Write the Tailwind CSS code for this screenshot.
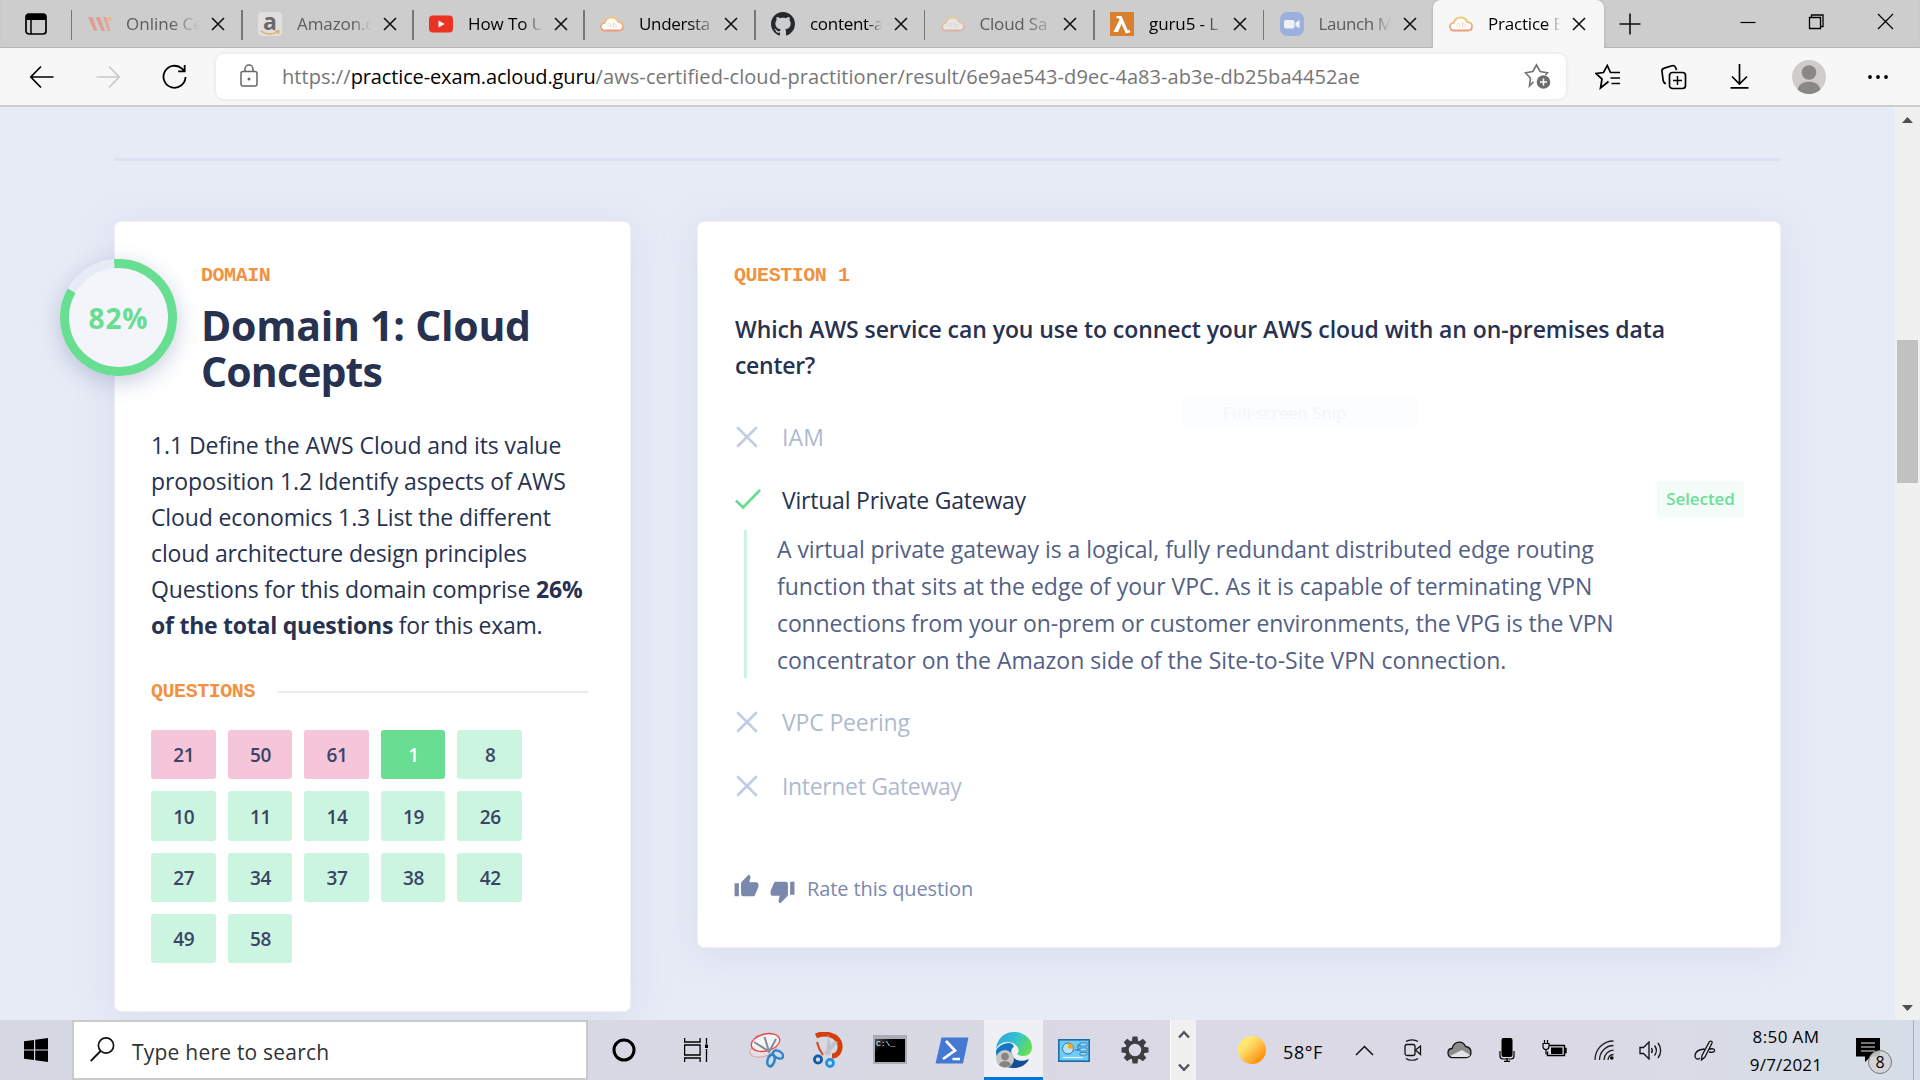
<!DOCTYPE html>
<html lang="en">
<head>
<meta charset="utf-8">
<title>Practice Exam</title>
<script src="https://cdn.jsdelivr.net/npm/@tailwindcss/browser@4"></script>
</head>
<body class="w-[1920px] h-[1080px] overflow-hidden flex flex-col font-['Open_Sans',sans-serif] bg-[#e7ebf6]">

<svg class="absolute w-0 h-0">
  <defs>
    <linearGradient id="cloudg" x1="0" y1="0" x2="0" y2="1"><stop offset="0" stop-color="#f6c77d"/><stop offset="1" stop-color="#ee9a7b"/></linearGradient>
    <symbol id="x" viewBox="0 0 14 14"><path d="M1 1L13 13M13 1L1 13" stroke="#111" stroke-width="1.6" fill="none"/></symbol>
    <symbol id="cloud" viewBox="0 0 24 24"><path d="M5 18.500C2.500 18.500 1 17 1 14.800c0-2.200 1.600-3.800 3.800-3.900C5.500 7.700 8 5.500 11.500 5.500c3.300 0 5.800 1.900 6.800 4.700 2.700.2 4.700 1.900 4.700 4.300 0 2.400-1.700 4-4.200 4z" fill="#fff" stroke="url(#cloudg)" stroke-width="1.800"/><path d="M8 15v-2.500c0-1.500 2.500-1.500 2.500 0V15M13.500 10v5h1.500c2 0 2-3 0-3h-1" stroke="#f8dcc2" stroke-width="1" fill="none"/></symbol>
    <symbol id="wrong" viewBox="0 0 22 22"><path d="M1.200 1.200L20.800 20.800M20.800 1.200L1.200 20.800" stroke="#c2cde3" stroke-width="2.700" fill="none"/></symbol>
  </defs>
</svg>

<!-- Tab strip -->
<div class="h-12 shrink-0 bg-[#cdcdcd] flex items-end shadow-[inset_0_-1px_1px_#b4b4b4]">
  <div class="w-[71px] h-12 pl-[25px] pt-3 shrink-0">
    <svg class="w-[22px] h-6" viewBox="0 0 22 24"><rect x="1" y="2" width="20" height="20" rx="3" fill="none" stroke="#000" stroke-width="1.700"/><path d="M1 8V5a3 3 0 0 1 3-3h14a3 3 0 0 1 3 3v3z"/><path d="M6 7v15" stroke="#000" stroke-width="1.500"/></svg>
  </div>

  <div class="w-[171px] h-12 shrink-0 flex items-center relative pl-[17px]">
    <div class="absolute left-[-0.5px] top-[10px] h-[30px] w-[1.5px] bg-[#777]"></div>
    <svg class="w-6 h-6 shrink-0" viewBox="0 0 24 24"><path d="M0 5h4.500l5 14H6zM7.500 5H12l5 14h-3.500z" fill="#dd9f96"/><path d="M15 5h3.500l4 14H20z" fill="#e0a696"/><circle cx="21.800" cy="7" r="2.200" fill="#ebb795"/></svg>
    <div class="ml-[14px] w-[74px] whitespace-nowrap text-[17px] text-[#5c5c5c] mask-r-from-60% mask-r-to-100%">Online Ce</div>
    <svg class="ml-[11px] w-[14px] h-[14px] shrink-0"><use href="#x"/></svg>
  </div>

  <div class="w-[171px] h-12 shrink-0 flex items-center relative pl-4">
    <div class="absolute left-[-1px] top-[10px] h-[30px] w-[1.5px] bg-[#777]"></div>
    <div class="w-6 h-6 shrink-0 rounded bg-[#dfdfdf] relative text-center font-bold text-[23px] leading-[18px] text-[#696969]">a<svg class="absolute left-0 top-0 w-6 h-6" viewBox="0 0 24 24"><path d="M3 19c5 4 12 4 17 0.500M17 19h4l-1 3" fill="none" stroke="#e0b163" stroke-width="1.500"/></svg></div>
    <div class="ml-[15px] w-[74px] whitespace-nowrap text-[17px] text-[#5c5c5c] tracking-[-0.1px] mask-r-from-75% mask-r-to-100%">Amazon.c</div>
    <svg class="ml-[12px] w-[14px] h-[14px] shrink-0"><use href="#x"/></svg>
  </div>

  <div class="w-[171px] h-12 shrink-0 flex items-center relative pl-4">
    <div class="absolute left-[-1px] top-[10px] h-[30px] w-[1.5px] bg-[#777]"></div>
    <svg class="w-6 h-6 shrink-0" viewBox="0 0 24 24"><rect y="3.500" width="24" height="17" rx="4" fill="#ea3323"/><path d="M9.500 8.500l6 3.500-6 3.500z" fill="#fff"/></svg>
    <div class="ml-[15px] w-[74px] whitespace-nowrap text-[17px] text-black tracking-[-0.1px] mask-r-from-75% mask-r-to-100%">How To U</div>
    <svg class="ml-[12px] w-[14px] h-[14px] shrink-0"><use href="#x"/></svg>
  </div>

  <div class="w-[171px] h-12 shrink-0 flex items-center relative pl-4">
    <div class="absolute left-[-1px] top-[10px] h-[30px] w-[1.5px] bg-[#777]"></div>
    <svg class="w-6 h-6 shrink-0"><use href="#cloud"/></svg>
    <div class="ml-[15px] w-[72px] whitespace-nowrap text-[17px] text-black tracking-[-0.3px] mask-r-from-70% mask-r-to-110%">Understa</div>
    <svg class="ml-[13px] w-[14px] h-[14px] shrink-0"><use href="#x"/></svg>
  </div>

  <div class="w-[169.500px] h-12 shrink-0 flex items-center relative pl-4">
    <div class="absolute left-[-1px] top-[10px] h-[30px] w-[1.5px] bg-[#777]"></div>
    <svg class="w-6 h-6 shrink-0" viewBox="0 0 16 16"><path fill="#24292e" d="M8 0C3.580 0 0 3.580 0 8c0 3.540 2.290 6.530 5.470 7.590.4.070.550-.170.550-.380 0-.190-.010-.820-.010-1.490-2.010.370-2.530-.490-2.690-.940-.090-.230-.480-.940-.820-1.130-.280-.150-.680-.520-.010-.530.630-.010 1.080.580 1.230.820.720 1.210 1.870.870 2.330.660.070-.520.280-.870.510-1.070-1.780-.2-3.640-.890-3.640-3.950 0-.870.310-1.590.820-2.150-.080-.2-.360-1.020.080-2.120 0 0 .670-.210 2.200.820.640-.180 1.320-.270 2-.270s1.360.090 2 .270c1.530-1.040 2.200-.820 2.200-.820.440 1.100.160 1.920.080 2.120.510.560.820 1.270.820 2.150 0 3.070-1.870 3.750-3.650 3.950.290.250.540.730.540 1.480 0 1.070-.010 1.930-.010 2.200 0 .210.150.460.550.380A8.010 8.010 0 0 0 16 8c0-4.420-3.580-8-8-8z"/></svg>
    <div class="ml-[15px] w-[72px] whitespace-nowrap text-[17px] text-black tracking-[-0.3px] mask-r-from-80% mask-r-to-100%">content-a</div>
    <svg class="ml-[12px] w-[14px] h-[14px] shrink-0"><use href="#x"/></svg>
  </div>

  <div class="w-[169.5px] h-12 shrink-0 flex items-center relative pl-4">
    <div class="absolute left-[-1px] top-[10px] h-[30px] w-[1.5px] bg-[#777]"></div>
    <svg class="w-6 h-6 shrink-0 opacity-50"><use href="#cloud"/></svg>
    <div class="ml-[15px] w-[72px] whitespace-nowrap text-[17px] text-[#5c5c5c] tracking-[-0.2px] mask-r-from-60% mask-r-to-110%">Cloud Sa</div>
    <svg class="ml-[11.500px] w-[14px] h-[14px] shrink-0"><use href="#x"/></svg>
  </div>

  <div class="w-[169.500px] h-12 shrink-0 flex items-center relative pl-4">
    <div class="absolute left-[-1px] top-[10px] h-[30px] w-[1.5px] bg-[#777]"></div>
    <svg class="w-6 h-6 shrink-0" viewBox="0 0 24 24"><rect width="24" height="24" fill="#d9802e"/><path d="M6.500 4h5l6.300 14.500 1.700-.7 1 2.500-4.700 1.200L11.600 12 8 20H3.500l6-12.500-.5-1.200H6.500z" fill="#fff"/></svg>
    <div class="ml-[15px] w-[72px] whitespace-nowrap text-[17px] text-black tracking-[-0.1px] mask-r-from-75% mask-r-to-105%">guru5 - L</div>
    <svg class="ml-[12px] w-[14px] h-[14px] shrink-0"><use href="#x"/></svg>
  </div>

  <div class="w-[169.500px] h-12 shrink-0 flex items-center relative pl-4">
    <div class="absolute left-[-1px] top-[10px] h-[30px] w-[1.5px] bg-[#777]"></div>
    <svg class="w-6 h-6 shrink-0" viewBox="0 0 24 24"><rect width="24" height="24" rx="7" fill="#9db0dd"/><rect x="4" y="8" width="10.500" height="8.500" rx="2" fill="#eef1f8"/><path d="M15.500 10.700l4-2.700v8.500l-4-2.700z" fill="#eef1f8"/></svg>
    <div class="ml-[15px] w-[72px] whitespace-nowrap text-[17px] text-[#5c5c5c] tracking-[-0.4px] mask-r-from-75% mask-r-to-100%">Launch M</div>
    <svg class="ml-[12px] w-[14px] h-[14px] shrink-0"><use href="#x"/></svg>
  </div>

  <div class="w-[171px] h-12 shrink-0 flex items-center pl-4 bg-[#f7f7f7] rounded-t-lg shadow-[0_0_3px_#aaa]">
    <svg class="w-6 h-6 shrink-0"><use href="#cloud"/></svg>
    <div class="ml-[15px] w-[72px] whitespace-nowrap text-[17px] text-black tracking-[-0.2px] mask-r-from-80% mask-r-to-100%">Practice E</div>
    <svg class="ml-[12px] w-[14px] h-[14px] shrink-0"><use href="#x"/></svg>
  </div>

  <div class="flex-1 h-12 flex items-center">
    <svg class="ml-[15px] w-[22px] h-[22px]" viewBox="0 0 22 22"><path d="M11 0.500v21M0.500 11h21" stroke="#111" stroke-width="1.600"/></svg>
    <svg class="ml-[99px] mb-[5px] w-[16px] h-[16px]" viewBox="0 0 16 16"><path d="M0.500 8.500h15" stroke="#000" stroke-width="1.200"/></svg>
    <svg class="ml-[52px] mb-[5px] w-[17px] h-[17px]" viewBox="0 0 17 17"><path d="M1.500 4.500h11v11h-11zM3.500 4.500v-2.500h11.500v11.500h-2.500" fill="none" stroke="#000" stroke-width="1.300"/></svg>
    <svg class="ml-[52px] mb-[5px] w-[17px] h-[17px]" viewBox="0 0 17 17"><path d="M1 1l15 15M16 1L1 16" stroke="#000" stroke-width="1.200"/></svg>
  </div>
</div>

<!-- Toolbar -->
<div class="h-[59px] shrink-0 bg-[#f7f7f7] border-b-2 border-[#cdcdcd] flex items-center">
  <svg class="ml-[29px] w-[25px] h-6 shrink-0" viewBox="0 0 25 24"><path d="M12 1.500L1.800 12 12 22.500M1.800 12H24.500" fill="none" stroke="#000" stroke-width="1.700"/></svg>
  <svg class="ml-[42px] w-[25px] h-6 shrink-0" viewBox="0 0 25 24"><path d="M13 1.500L23.200 12 13 22.500M23.200 12H.5" fill="none" stroke="#c9c9c9" stroke-width="1.700"/></svg>
  <svg class="ml-[41px] w-[25px] h-[26px] shrink-0" viewBox="0 0 25 26"><path d="M23.500 13a11 11 0 1 1-3.500-8.300L22.500 7M22.700 1v6.300h-6.500" fill="none" stroke="#000" stroke-width="1.800"/></svg>
  <div class="ml-[29px] w-[1350px] h-[45px] bg-white rounded-lg shadow-[0_0_4px_rgba(0,0,0,0.10)] flex items-center shrink-0">
    <svg class="ml-6 w-[18px] h-6 mb-px shrink-0" viewBox="0 0 18 24"><rect x="1" y="7.500" width="16" height="14.500" rx="2" fill="none" stroke="#666" stroke-width="1.500"/><path d="M5 7.500V5a4 4 0 0 1 8 0v2.500" fill="none" stroke="#666" stroke-width="1.500"/><circle cx="9" cy="15" r="1.500" fill="#666"/></svg>
    <div class="ml-6 w-[1242px] text-[20px] leading-[26px] text-[#767676] whitespace-nowrap"><span class="tracking-[0.05px]">https://</span><span class="text-black tracking-[-0.13px]">practice-exam.acloud.guru</span><span class="tracking-[0.075px]">/aws-certified-cloud-practitioner/result/6e9ae543-d9ec-4a83-ab3e-db25ba4452ae</span></div>
    <svg class="w-[27px] h-[27px] shrink-0" viewBox="0 0 27 27"><path d="M9.500 18.700L5.500 23l1-7.800L1.500 9.800l7.300-1.300L12.500 2l3.600 6.500 7.300 1.300-2 2.200" fill="none" stroke="#717171" stroke-width="1.600"/><circle cx="19.500" cy="19" r="6.800" fill="#6c6c6c"/><path d="M19.500 15.500v7M16 19h7" stroke="#fff" stroke-width="1.500"/></svg>
  </div>
  <svg class="ml-[29px] w-[26px] h-[26px] shrink-0" viewBox="0 0 26 26"><path d="M13.500 17.500L5.500 24l1.500-9L1 9.500l7.500-1L12.300 1.500l3.200 7H25M15.500 14H25M16.500 19.500H25" fill="none" stroke="#000" stroke-width="1.700"/></svg>
  <svg class="ml-[40px] w-[26px] h-[26px] shrink-0" viewBox="0 0 26 26"><path d="M5 19.500C3 19.500 2.500 18 2.200 16.500L1 7.500c-.3-2 .5-3 2.300-3.400L11 1.700c2-.5 3 .2 3.600 1.800l1 2.500" fill="none" stroke="#000" stroke-width="1.700"/><rect x="8.500" y="8.500" width="16" height="16" rx="3" fill="none" stroke="#000" stroke-width="1.700"/><path d="M16.500 12v9M12 16.500h9" stroke="#000" stroke-width="1.500"/></svg>
  <svg class="ml-[43px] w-[19px] h-[25px] shrink-0" viewBox="0 0 19 25"><path d="M9.500 0v19.500M2 12.500l7.500 7.500 7.500-7.500M.5 23.800h18" fill="none" stroke="#000" stroke-width="1.700"/></svg>
  <svg class="ml-[43px] w-[34px] h-[34px] shrink-0" viewBox="0 0 34 34"><circle cx="17" cy="17" r="17" fill="#cfcdc9"/><circle cx="17" cy="12.500" r="7.300" fill="#8a8886"/><path d="M5.500 29.500C7 24 11 21.700 17 21.700s10 2.300 11.500 7.800A17 17 0 0 1 5.500 29.500z" fill="#8a8886"/></svg>
  <svg class="ml-[42px] w-[20px] h-[6px] shrink-0" viewBox="0 0 20 6"><circle cx="2" cy="3" r="1.900"/><circle cx="10" cy="3" r="1.900"/><circle cx="18" cy="3" r="1.900"/></svg>
</div>

<!-- Page -->
<div class="h-[913px] shrink-0 flex overflow-hidden bg-[#e7ebf6]">
  <main class="w-[1895px] pl-[114px] pr-[114px] pt-[51px] text-[#273150]">
    <div class="h-[3px] bg-[#dae1f0]"></div>
    <div class="mt-[60px] flex items-start justify-between">

      <section class="relative w-[517px] h-[791px] bg-white rounded-[7px] border border-[#eef0f5] shadow-[0_6px_36px_rgba(160,172,205,0.22)] px-9 pt-[42px]">
        <div class="absolute left-[-55px] top-[37px] w-[117px] h-[117px] rounded-full bg-[#f3f5fa] shadow-[0_6px_22px_rgba(130,145,185,0.45)] flex items-center justify-center">
          <svg class="absolute inset-0 w-[117px] h-[117px]" viewBox="0 0 117 117"><circle cx="58.500" cy="58.500" r="54" fill="none" stroke="#e7ebf6" stroke-width="9"/><circle cx="58.500" cy="58.500" r="54" fill="none" stroke="#67de91" stroke-width="9" pathLength="100" stroke-dasharray="84.500 100" transform="rotate(-94.500 58.500 58.500)"/></svg>
          <span class="relative text-[28px] leading-[38px] font-bold text-[#67de91] tracking-[0.9px]">82%</span>
        </div>
        <div class="pl-[50px]">
          <div class="font-['Liberation_Mono',monospace] font-bold text-[20px] leading-6 text-[#f0923f] tracking-[-0.45px]">DOMAIN</div>
          <h1 class="mt-[14px] text-[41px] leading-[46px] font-bold tracking-[-0.25px] whitespace-nowrap">Domain 1: Cloud<br><span class="tracking-[-0.85px]">Concepts</span></h1>
        </div>
        <p class="mt-[33px] text-[23px] leading-9 tracking-[-0.08px] whitespace-nowrap">1.1 Define the AWS Cloud and its value<br>proposition 1.2 Identify aspects of AWS<br><span class="tracking-[-0.12px]">Cloud economics 1.3 List the different</span><br><span class="tracking-[-0.14px]">cloud architecture design principles</span><br><span class="tracking-[-0.14px]">Questions for this domain comprise <b>26%</b></span><br><b class="tracking-[-0.24px]">of the total questions</b><span class="tracking-[-0.25px]"> for this exam.</span></p>
        <div class="mt-[37px] flex items-center h-6">
          <span class="font-['Liberation_Mono',monospace] font-bold text-[20px] leading-6 text-[#f0923f] tracking-[-0.45px]">QUESTIONS</span>
          <span class="ml-[23px] w-[310px] h-[2px] bg-[#e7ebf6]"></span>
        </div>
        <div class="mt-[26px] grid grid-cols-[repeat(5,64.600px)] auto-rows-[49.300px] gap-3 text-[19px] font-semibold text-[#3a4565] tracking-[-0.36px] *:flex *:items-center *:justify-center *:rounded-[3px] *:pt-[2px] *:pl-px">
          <div class="bg-[#f5c6da]">21</div><div class="bg-[#f5c6da]">50</div><div class="bg-[#f5c6da]">61</div><div class="bg-[#67de91] text-white">1</div><div class="bg-[#cbf4e1]">8</div>
          <div class="bg-[#cbf4e1]">10</div><div class="bg-[#cbf4e1]">11</div><div class="bg-[#cbf4e1]">14</div><div class="bg-[#cbf4e1]">19</div><div class="bg-[#cbf4e1]">26</div>
          <div class="bg-[#cbf4e1]">27</div><div class="bg-[#cbf4e1]">34</div><div class="bg-[#cbf4e1]">37</div><div class="bg-[#cbf4e1]">38</div><div class="bg-[#cbf4e1]">42</div>
          <div class="bg-[#cbf4e1]">49</div><div class="bg-[#cbf4e1]">58</div>
        </div>
      </section>

      <section class="relative w-[1084px] h-[727px] bg-white rounded-[7px] border border-[#eef0f5] shadow-[0_6px_36px_rgba(160,172,205,0.22)] px-9 pt-[42px]">
        <div class="font-['Liberation_Mono',monospace] font-bold text-[20px] leading-6 text-[#f0923f] tracking-[-0.45px]">QUESTION 1</div>
        <h2 class="mt-[23px] pl-px text-[23px] leading-9 font-semibold tracking-[-0.08px] whitespace-nowrap">Which AWS service can you use to connect your AWS cloud with an on-premises data<br><span class="tracking-[-0.3px]">center?</span></h2>
        <!-- fading snip menu entry -->
        <div class="absolute left-[484px] top-[174px] w-[236px] h-[31px] bg-[#fcfdfe] pl-[41px] text-[17px] leading-[34px] text-[#f3f5f7] tracking-[-0.1px] whitespace-nowrap">Full-screen Snip</div>
        <div class="mt-9 h-9 flex items-center text-[23px] text-[#afbace]"><svg class="ml-[2px] w-[22px] h-[22px]"><use href="#wrong"/></svg><span class="ml-6 tracking-[0.1px]">IAM</span></div>
        <div class="mt-[27px] h-9 flex items-center text-[23px]">
          <svg class="ml-[1px] mb-[2px] w-[26px] h-5 shrink-0" viewBox="0 0 26 20"><path d="M1 11.500l7 7L25 1" fill="none" stroke="#67de91" stroke-width="2.700"/></svg>
          <span class="ml-[21px] tracking-[-0.22px]">Virtual Private Gateway</span>
          <span class="ml-auto w-[87px] h-9 mb-[2px] rounded bg-[#f3fcf8] text-center text-[17px] leading-[35px] font-semibold text-[#6fdc98] tracking-[-0.1px]">Selected</span>
        </div>
        <div class="mt-3 ml-[10px] border-l-3 border-[#cbf4e1] pl-[30px] text-[23px] leading-[37px] text-[#535f85] whitespace-nowrap"><div class="relative top-px"><span class="tracking-[-0.05px]">A virtual private gateway is a logical, fully redundant distributed edge routing</span><br><span class="tracking-[-0.01px]">function that sits at the edge of your VPC. As it is capable of terminating VPN</span><br><span class="tracking-[-0.13px]">connections from your on-prem or customer environments, the VPG is the VPN</span><br>concentrator on the Amazon side of the Site-to-Site VPN connection.</div></div>
        <div class="mt-[26px] h-9 flex items-center text-[23px] text-[#afbace]"><svg class="ml-[2px] w-[22px] h-[22px]"><use href="#wrong"/></svg><span class="ml-6 tracking-[-0.15px]">VPC Peering</span></div>
        <div class="mt-[28px] h-9 flex items-center text-[23px] text-[#afbace]"><svg class="ml-[2px] mb-px w-[22px] h-[22px]"><use href="#wrong"/></svg><span class="ml-6 tracking-[-0.34px]">Internet Gateway</span></div>
        <div class="mt-[70px] h-[30px] flex items-center text-[20px] leading-[30px] text-[#7b88ad]">
          <svg class="w-[25px] h-[25px] mb-[5px]" viewBox="0.500 0.500 23 23"><path fill="#7b88ad" d="M1 21h4V9H1v12zm22-11c0-1.100-.9-2-2-2h-6.310l.950-4.570.030-.320c0-.410-.170-.790-.440-1.060L14.170 1 7.590 7.590C7.220 7.950 7 8.450 7 9v10c0 1.100.9 2 2 2h9c.830 0 1.540-.5 1.840-1.220l3.020-7.050c.090-.230.140-.470.140-.730v-2z"/></svg>
          <svg class="ml-[11px] w-[25px] h-[25px] mt-[5px]" viewBox="0.500 0.500 23 23"><path fill="#7b88ad" d="M15 3H6c-.830 0-1.540.5-1.840 1.220l-3.020 7.050c-.090.230-.140.470-.140.730v2c0 1.100.9 2 2 2h6.310l-.950 4.570-.030.320c0 .410.170.790.440 1.060L9.830 23l6.590-6.590c.360-.360.580-.860.580-1.410V5c0-1.100-.9-2-2-2zm4 0v12h4V3h-4z"/></svg>
          <span class="ml-3 tracking-[-0.1px]">Rate this question</span>
        </div>
      </section>
    </div>
  </main>
  <!-- Scrollbar -->
  <div class="w-[25px] bg-[#f0f0f0] flex flex-col items-center">
    <svg class="mt-[10px] w-[11px] h-[6px] shrink-0" viewBox="0 0 11 6"><path d="M0 6L5.500 0 11 6z" fill="#505050"/></svg>
    <div class="mt-[217px] w-[21px] h-[143px] shrink-0 bg-[#c1c1c1]"></div>
    <svg class="mt-auto mb-[9px] w-[11px] h-[6px] shrink-0" viewBox="0 0 11 6"><path d="M0 0L5.500 6 11 0z" fill="#505050"/></svg>
  </div>
</div>

<!-- Taskbar -->
<div class="h-[60px] shrink-0 bg-linear-to-r from-[#d5d8e2] via-[#dbd9e5] via-80% to-[#d5dee8] flex items-center text-black">
  <svg class="ml-6 w-6 h-6 shrink-0" viewBox="0 0 24 24"><path d="M0 3.300l10-1.400v9.500H0zM11.200 1.700L24 0v11.400H11.200zM0 12.500h10v9.500L0 20.700zM11.200 12.500H24V24l-12.800-1.700z"/></svg>
  <div class="ml-[24px] w-[516px] h-[60px] shrink-0 bg-white border-2 border-[#c9cacb] flex items-center">
    <svg class="ml-4 w-[25px] h-[25px] mb-[1px]" viewBox="0 0 25 25"><circle cx="16" cy="8.500" r="7.600" fill="none" stroke="#111" stroke-width="1.700"/><path d="M10.600 14L.8 24" stroke="#111" stroke-width="1.800"/></svg>
    <span class="ml-[17px] mt-[6px] text-[21px] text-[#2f3236] tracking-[0.22px]">Type here to search</span>
  </div>
  <svg class="ml-6 w-6 h-6 shrink-0" viewBox="0 0 24 24"><circle cx="12" cy="12" r="10" fill="none" stroke="#000" stroke-width="3"/></svg>
  <svg class="ml-12 w-6 h-6 shrink-0" viewBox="0 0 24 24"><path d="M.6 0v4h15.500V0M.6 24v-4h15.500v4M.6 7h15.500v10H.6zM22.500 0v6M22.500 11v13" fill="none" stroke="#000" stroke-width="1.300"/><rect x="21" y="6.500" width="3" height="3.500"/></svg>
  <!-- Snipping Tool -->
  <svg class="ml-[41px] w-[35px] h-9 shrink-0" viewBox="0 0 35 36"><ellipse cx="14" cy="17.500" rx="13.500" ry="7" transform="rotate(-14 14 17.500)" fill="#e8dfe6" stroke="#e79aa2" stroke-width="1"/><ellipse cx="16.500" cy="10.500" rx="14.500" ry="8.500" transform="rotate(-14 16.500 10.500)" fill="#f6f4f7" stroke="#e8474b" stroke-width="1.300"/><path d="M5 10l16 10M15.500 5l5 16M27 7l-7 13" stroke="#858b92" stroke-width="2" fill="none"/><ellipse cx="29" cy="22.500" rx="5.500" ry="3.500" transform="rotate(30 29 22.500)" fill="none" stroke="#2b86cc" stroke-width="2.500"/><ellipse cx="22" cy="28.500" rx="3.500" ry="6" transform="rotate(15 22 28.500)" fill="none" stroke="#2b86cc" stroke-width="2.500"/></svg>
  <!-- Snip & Sketch -->
  <svg class="ml-[29px] w-[31px] h-9 shrink-0" viewBox="0 0 31 36"><path d="M4 10c1 5 3 9 6 13" fill="none" stroke="#d24a1c" stroke-width="2"/><path d="M3 4c6-3 13-2 18 0.500 6.500 4 7.500 11 4.500 16-1.500 2.500-4 3.500-6.500 3.500" fill="none" stroke="#d43e0a" stroke-width="5"/><path d="M15 2l3.500 14-1.500 7-4-2zM25 10L13.500 24l-2-3.500L21 9z" fill="#bfc3c9"/><circle cx="5" cy="27.500" r="3.600" fill="none" stroke="#0f5cab" stroke-width="2.800"/><circle cx="17" cy="31" r="3.500" fill="none" stroke="#1f95de" stroke-width="2.800"/></svg>
  <!-- Command prompt -->
  <div class="ml-[29px] w-[34px] h-[29px] shrink-0 bg-linear-to-br from-[#555] to-black to-40% border-2 border-t-4 border-[#a9adb3] mb-[1px] font-['Liberation_Mono',monospace] text-[8px] leading-[9px] text-white pl-[1px]">C:\_</div>
  <!-- PowerShell -->
  <svg class="ml-[28px] w-[34px] h-[27px] shrink-0" viewBox="0 0 34 27"><path d="M6.500.5h27L28 26.500H.5z" fill="#4578d2"/><path d="M11 4l9 9.500L8 22M17.500 22h7.500" fill="none" stroke="#fff" stroke-width="2.700"/></svg>
  <!-- Edge -->
  <div class="ml-[15px] w-[59px] h-[60px] shrink-0 bg-[#eef0f5] border-b-3 border-[#0078d7] flex justify-center items-start pt-3">
    <svg class="w-9 h-9" viewBox="0 0 36 36">
      <defs><linearGradient id="eg" x1="0" y1=".2" x2="1" y2=".6"><stop offset="0" stop-color="#2aa5de"/><stop offset=".5" stop-color="#33c3cf"/><stop offset="1" stop-color="#66e04e"/></linearGradient></defs>
      <path d="M12 11C5 12 0 16 0 20c0 9 8 16 17 16 7 0 12-3 15.500-8C26 31 18 29 16 23c-1.500-4-.5-7 2-8.500C17 12 15 11 12 11z" fill="#1277c4"/>
      <path d="M16 22c1 6 8 9 17 5-3 6-9 9-15 9C11 35 8 26 13 18z" fill="#114f96"/>
      <path d="M0 17C1 7 8 0 18 0s18 7 18 15c0 6-4 9-9 9-3 0-6-1-5.500-2.500C23 20 23 18 22 16c-2-4-6-6-11-6C6 10 2 13 0 17z" fill="url(#eg)"/>
      <circle cx="9" cy="27" r="9" fill="#c9c8c6"/><circle cx="9" cy="24.500" r="3.800" fill="#87857f"/><path d="M3 33c1-3 3-4 6-4s5 1 6 4a9 9 0 0 1-12 0z" fill="#87857f"/>
    </svg>
  </div>
  <!-- Control panel -->
  <svg class="ml-[15px] w-8 h-[23px] shrink-0" viewBox="0 0 32 23"><rect x=".8" y=".8" width="30.400" height="21.400" fill="#6fcbf5" stroke="#1e6ca5" stroke-width="1.600"/><circle cx="10" cy="9.500" r="5.500" fill="#b5e3f8" stroke="#2379b8" stroke-width="1"/><path d="M10 9.500V4a5.500 5.500 0 0 1 5.500 5.500z" fill="#f5a623"/><path d="M17 11h3V6h2M20 11h2" stroke="#1a75ae" fill="none"/><path d="M22 4h7v3h-7zM22 9h7v3h-7zM22 13.500h7v2.500h-7z" fill="#a5ddf7" stroke="#2379b8" stroke-width=".8"/><path d="M5 18.500h20" stroke="#def3fc" stroke-width="1.200"/></svg>
  <!-- Settings -->
  <svg class="ml-[31px] w-7 h-7 shrink-0" viewBox="-14 -14 28 28"><g fill="#3d3e42"><path id="tooth" d="M-2.500-13.500h5L3.200-8h-6.400z"/><use href="#tooth" transform="rotate(45)"/><use href="#tooth" transform="rotate(90)"/><use href="#tooth" transform="rotate(135)"/><use href="#tooth" transform="rotate(180)"/><use href="#tooth" transform="rotate(225)"/><use href="#tooth" transform="rotate(270)"/><use href="#tooth" transform="rotate(315)"/></g><circle r="8" fill="none" stroke="#3d3e42" stroke-width="3.600"/></svg>
  <div class="ml-[21px] w-[26px] h-[60px] shrink-0 bg-[#f0f0f0] border-l border-white flex flex-col items-center justify-between pt-[10px] pb-[8px]">
    <svg class="w-3 h-[9px]" viewBox="0 0 12 9"><path d="M1 7.500L6 2.200 11 7.500" fill="none" stroke="#505357" stroke-width="2.400"/></svg>
    <svg class="w-3 h-[9px]" viewBox="0 0 12 9"><path d="M1 1.500L6 6.800 11 1.500" fill="none" stroke="#505357" stroke-width="2.400"/></svg>
  </div>
  <!-- Weather -->
  <div class="ml-[42px] w-7 h-7 shrink-0 rounded-full bg-linear-to-br from-[#ffe66e] from-30% to-[#ff9400] to-80%"></div>
  <span class="ml-[17px] mt-[5px] w-[56px] text-[18px] tracking-[0.6px]">58°F</span>
  <svg class="ml-[16px] w-[19px] h-[11px] shrink-0" viewBox="0 0 19 11"><path d="M1 10l8.500-8.500L18 10" fill="none" stroke="#111" stroke-width="1.500"/></svg>
  <svg class="ml-[30px] w-[18px] h-[22px] shrink-0" viewBox="0 0 18 22"><path d="M2 2.500C5 .2 11 .2 14 2.500M2 19.500c3 2.300 9 2.300 12 0" fill="none" stroke="#111" stroke-width="1.200"/><rect x="1" y="5.500" width="10" height="11" rx="2" fill="none" stroke="#111" stroke-width="1.300"/><path d="M11.500 11l5-4v8.500z" fill="none" stroke="#111" stroke-width="1.300"/></svg>
  <svg class="ml-[25px] w-[25px] h-[18px] shrink-0" viewBox="0 0 25 18"><path d="M5.500 16.500C2.500 16.500 1 14.500 1 12c0-2.500 1.500-4.500 4-4.500C6 4 9 1.200 12.500 1.200c3 0 5 1.800 6 4.300 3.500.5 5.500 3 5.500 5.800 0 3-2 5.200-5 5.200z" fill="#8c8c8c" stroke="#111" stroke-width="1.300"/><path d="M3 15L15 9l8 5c-1 1.500-2.500 2-4 2H5.500z" fill="#e4e4e4"/></svg>
  <svg class="ml-[27px] w-4 h-6 shrink-0" viewBox="0 0 16 24"><rect x="2.500" width="11" height="19" rx="2"/><path d="M1 13v5c0 2 1 3 3 3h8c2 0 3-1 3-3v-5M8 20v3.300M5 23.400h6" fill="none" stroke="#000" stroke-width="1.200"/></svg>
  <svg class="ml-[27px] w-[25px] h-[18px] shrink-0 mb-[2px]" viewBox="0 0 25 18"><path d="M7 5.500h15.500v10H5.500v-4M22.500 8.500H24v4h-1.500" fill="none" stroke="#000" stroke-width="1.400"/><rect x="9" y="7.500" width="11.500" height="6.500"/><path d="M1 3.500h6v3c0 2-1.300 3-3 3s-3-1-3-3zM2.500 0v3.500M5.500 0v3.500M4 9.500v5" fill="none" stroke="#000" stroke-width="1.200"/></svg>
  <svg class="ml-[27px] w-5 h-5 shrink-0" viewBox="0 0 20 20"><path d="M1 20C1 9.500 9 1 19.500 1M5.500 20C5.500 12 12 5.500 19.500 5.500M10 20c0-5.500 4.500-9.800 9.500-9.800M14 20c.3-3 2.500-5.300 5.500-5.500" fill="none" stroke="#222" stroke-width="1.300"/><circle cx="17.800" cy="18" r="1.800"/></svg>
  <svg class="ml-[25px] w-[23px] h-[19px] shrink-0" viewBox="0 0 23 19"><path d="M1 6.500h3.500L10 1v17l-5.500-5.500H1z" fill="none" stroke="#111" stroke-width="1.300"/><path d="M12.500 7c1 1.500 1 3.500 0 5M15.500 4.500c2.300 3 2.300 7 0 10M19 2c3.500 4.500 3.500 10.500 0 15" fill="none" stroke="#111" stroke-width="1.300"/></svg>
  <svg class="ml-[32px] w-[22px] h-[21px] shrink-0" viewBox="0 0 22 21"><path d="M15.500 1.500c1.500-1 3 0 2.500 1.500L11 17l-3.500 3 .5-4.500zM10.500 9C5 9.500 1 12 1 16c0 3 3 4 5 2M14.500 9.500c4-1.500 6.500-.5 6 1.500-.3 1-2.500 1.500-5.500 1" fill="none" stroke="#111" stroke-width="1.300"/></svg>
  <div class="ml-[31px] mt-px w-[78px] shrink-0 flex flex-col text-center text-[17px] leading-7 whitespace-nowrap"><span class="tracking-[0.4px]">8:50 AM</span><span class="tracking-[0.2px]">9/7/2021</span></div>
  <div class="relative ml-[31px] w-9 h-9 shrink-0">
    <svg class="absolute left-0 top-0 w-6 h-6 mt-[6px]" viewBox="0 0 24 24"><path d="M0 0h24v18.500h-9L9 24v-5.500H0z"/><path d="M5 5h14M5 9h14M5 13h14" stroke="#e5e5ee" stroke-width="1.200"/></svg>
    <span class="absolute left-[12px] top-[18px] w-6 h-6 rounded-full bg-[#d3d3d6]/90 border border-[#777] text-center text-[16px] leading-[22px]">8</span>
  </div>
  <div class="ml-auto mr-[6px] h-[60px] w-px bg-[#a9adb5]"></div>
</div>
</body>
</html>
